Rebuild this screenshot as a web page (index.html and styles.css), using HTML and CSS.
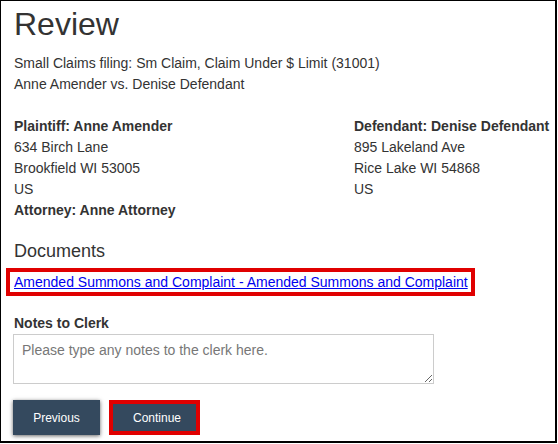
FILE: index.html
```html
<!DOCTYPE html>
<html lang="en">
<head>
    <meta charset="UTF-8">
    <meta name="viewport" content="width=device-width, initial-scale=1.0">
    <title>Review</title>
    <link rel="stylesheet" href="styles.css">
</head>
<body>
    <div class="frame">
        <div class="page">
            <h1>Review</h1>
            <p class="summary">
                Small Claims filing: Sm Claim, Claim Under $ Limit (31001)<br>
                Anne Amender vs. Denise Defendant
            </p>

            <div class="parties">
                <div class="party">
                    <strong>Plaintiff: Anne Amender</strong><br>
                    634 Birch Lane<br>
                    Brookfield WI 53005<br>
                    US<br>
                    <strong>Attorney: Anne Attorney</strong>
                </div>
                <div class="party">
                    <strong>Defendant: Denise Defendant</strong><br>
                    895 Lakeland Ave<br>
                    Rice Lake WI 54868<br>
                    US
                </div>
            </div>

            <h2>Documents</h2>
            <div class="doc-link">
                <a href="#">Amended Summons and Complaint - Amended Summons and Complaint</a>
            </div>

            <label class="notes-label" for="notes">Notes to Clerk</label>
            <textarea id="notes" class="notes" placeholder="Please type any notes to the clerk here."></textarea>

            <div class="actions">
                <button class="btn btn-prev">Previous</button>
                <button class="btn btn-next">Continue</button>
            </div>
        </div>
    </div>
</body>
</html>
```

FILE: styles.css
```css
body {
    font-family: "Liberation Sans", Arial, sans-serif;
    margin: 0;
    padding: 0;
    background-color: white;
    color: #333;
    font-size: 14px;
    line-height: 21px;
}
.frame {
    width: 557px;
    height: 443px;
    box-sizing: border-box;
    border-top: 1px solid #000;
    border-left: 1px solid #000;
    border-right: 2px solid #000;
    border-bottom: 2px solid #000;
    overflow: hidden;
}
.page {
    padding: 6px 0 0 13px;
}
h1 {
    margin: 0;
    font-size: 32px;
    font-weight: normal;
    line-height: 35px;
}
.summary {
    margin: 11px 0 21px 0;
}
.parties {
    display: grid;
    grid-template-columns: 340px 1fr;
    white-space: nowrap;
}
h2 {
    margin: 20px 0 7px 0;
    font-size: 18px;
    font-weight: normal;
    line-height: 20px;
}
.doc-link {
    display: inline-block;
    margin-left: -8px;
    padding: 0 3px 0 4px;
    border: 4px solid #e00000;
    line-height: 20px;
}
.doc-link a {
    color: #0000ee;
}
.notes-label {
    display: block;
    margin-top: 17px;
    font-weight: bold;
    line-height: 21px;
}
.notes {
    display: block;
    width: 421px;
    height: 50px;
    box-sizing: border-box;
    margin: 0 0 0 -1px;
    padding: 5px 8px;
    border: 1px solid #ccc;
    font-family: "Liberation Sans", Arial, sans-serif;
    font-size: 14px;
    line-height: 20px;
    color: #333;
}
.notes::placeholder {
    color: #777;
}
.actions {
    display: flex;
    gap: 9px;
    margin: 16px 0 0 -1px;
}
.btn {
    height: 35px;
    padding: 0 20px;
    background-color: #34495e;
    color: white;
    border: none;
    font-family: "Liberation Sans", Arial, sans-serif;
    font-size: 12px;
    cursor: pointer;
}
.btn-prev {
    width: 87px;
    box-shadow: 0 1px 4px rgba(0, 0, 0, 0.6);
}
.btn-next {
    width: 91px;
    border: 4px solid #e00000;
}
```
